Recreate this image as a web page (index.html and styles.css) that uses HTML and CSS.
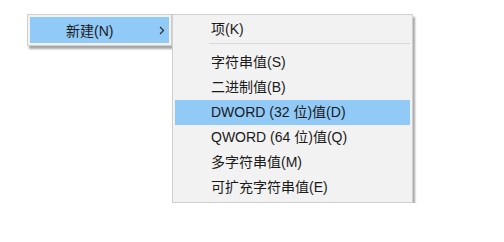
FILE: index.html
```html
<!DOCTYPE html>
<html lang="zh-CN">
<head>
    <meta charset="UTF-8">
    <title>新建</title>
    <link rel="stylesheet" href="styles.css">
</head>
<body>
    <div class="menus">
        <div class="menu main-menu">
            <div class="item active">
                <span class="label">新建(N)</span>
                <svg class="arrow" width="6" height="9" viewBox="0 0 6 9"><path d="M1 1 L4.5 4.5 L1 8" fill="none" stroke="#333" stroke-width="1.3"/></svg>
            </div>
        </div>
        <div class="menu sub-menu">
            <div class="item">项(K)</div>
            <div class="sep"></div>
            <div class="item">字符串值(S)</div>
            <div class="item">二进制值(B)</div>
            <div class="item active">DWORD (32 位)值(D)</div>
            <div class="item">QWORD (64 位)值(Q)</div>
            <div class="item">多字符串值(M)</div>
            <div class="item">可扩充字符串值(E)</div>
        </div>
    </div>
</body>
</html>
```

FILE: styles.css
```css
body {
    margin: 0;
    background-color: #fff;
    font-family: 'Liberation Sans', 'Noto Sans CJK SC', sans-serif;
    font-size: 14px;
    color: #1a1a1a;
}
.menus {
    display: flex;
    align-items: flex-start;
    padding: 14px 0 0 27px;
}
.menu {
    background-color: #f2f2f2;
    border: 1px solid #cfcfcf;
    padding: 2px;
    box-shadow: 2px 3px 2px rgba(0,0,0,0.35);
}
.main-menu {
    width: 139px;
}
.main-menu .item {
    height: 26px;
    display: flex;
    align-items: center;
    padding-left: 36px;
}
.main-menu .arrow {
    margin-left: auto;
    margin-right: 4px;
}
.sub-menu {
    width: 235px;
    position: relative;
    z-index: 1;
}
.sub-menu .item {
    height: 25px;
    line-height: 25px;
    padding-left: 36px;
}
.sep {
    height: 1px;
    background-color: #d7d7d7;
    margin: 1px 0 6px 34px;
}
.item.active {
    background-color: #91c9f7;
}
```
